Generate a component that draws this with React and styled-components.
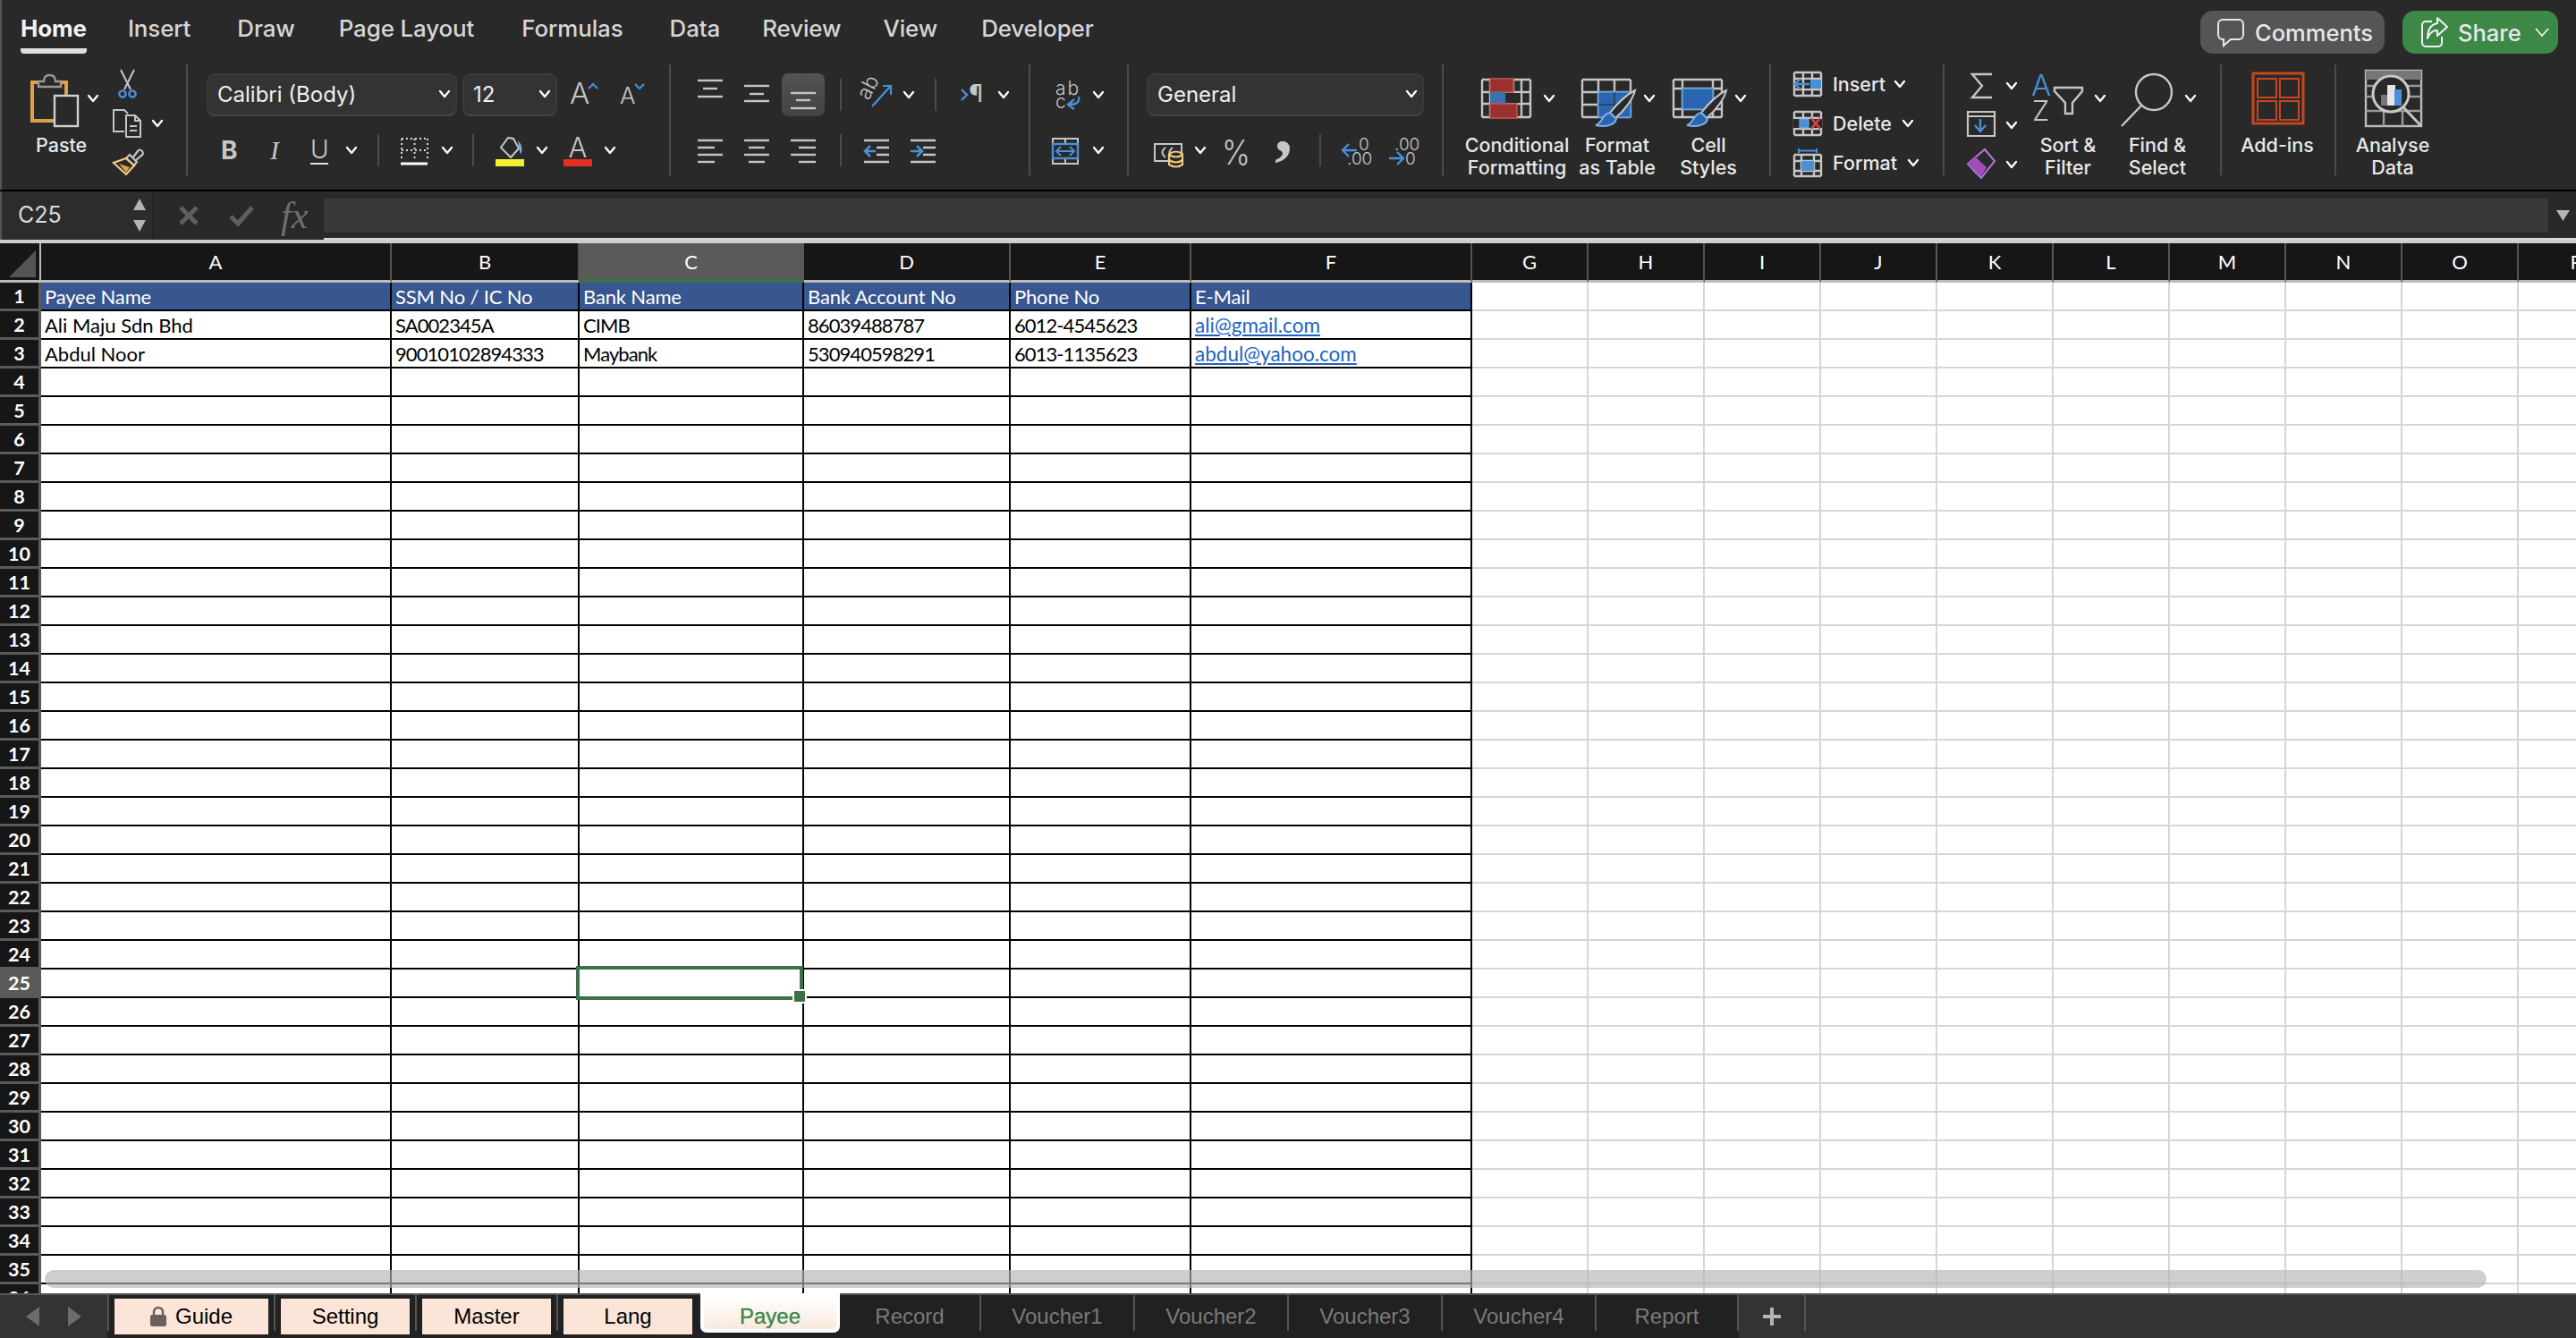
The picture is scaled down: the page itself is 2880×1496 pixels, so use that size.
import React from "react";
import styled, { createGlobalStyle } from "styled-components";

const UI = `"Inter", "Liberation Sans", sans-serif`;
const GRAY = "#c6c6c6";
const BLUE = "#4a90d6";
const DEEP = "#2a65b0";

const Global = createGlobalStyle`
  html, body { margin: 0; padding: 0; background: #292929; overflow: hidden; }
  body { font-family: ${UI}; }
  * { box-sizing: border-box; }
`;

const Page = styled.div`
  width: 2880px; height: 1496px; display: flex; flex-direction: column; overflow: hidden; background: #292929;
`;

/* ---------- ribbon ---------- */
const Ribbon = styled.header`
  height: 214px; flex: none; background: #292929; border-bottom: 2px solid #000;
  box-shadow: inset 2px 0 0 #555; display: flex; flex-direction: column;
`;
const TabRow = styled.nav`
  height: 72px; flex: none; display: flex; align-items: flex-start; padding: 0 20px 0 23px;
`;
const MenuTab = styled.span`
  height: 60px; line-height: 64px; margin-right: ${p => p.$gap}px; font-size: 25.9px; letter-spacing: -0.1px;
  font-weight: ${p => (p.$active ? 700 : 500)}; color: ${p => (p.$active ? "#f2f2f2" : "#d6d6d6")};
  border-bottom: ${p => (p.$active ? "6px solid #dedede" : "6px solid transparent")}; border-radius: 0 0 4px 4px;
`;
const Actions = styled.div`
  margin-left: auto; display: flex; gap: 20px; padding-top: 12px;
`;
const ActionButton = styled.button`
  height: 48px; width: ${p => p.$w}px; border: none; border-radius: 14px; display: flex; align-items: center; gap: 11px;
  padding: 0 0 0 ${p => p.$pad}px; background: ${p => p.$bg}; color: #e8e8e8; font: 500 25.5px ${UI};
`;
const Tools = styled.div`
  height: 124px; flex: none; display: flex;
`;
const Group = styled.section`
  width: ${p => p.$w}px; flex: none; display: flex; height: 124px; padding-top: 10px;
  ${p => (p.$last ? "" : "border-right: 2px solid #4c4c4c;")}
`;
const Stack = styled.div`
  display: flex; flex-direction: column; gap: 14px; flex: none;
`;
const ToolRow = styled.div`
  height: 48px; display: flex; align-items: center; padding-left: ${p => p.$pad || 0}px;
`;
const TightStack = styled.div`
  display: flex; flex-direction: column; gap: 12px; margin-top: -2px; margin-left: ${p => p.$ml}px; flex: none;
`;
const TightRow = styled.div`
  height: 32px; display: flex; align-items: center;
`;
const Ico = styled.svg.attrs(p => ({
  width: p.$w, height: p.$h || 48, viewBox: `0 0 ${p.$w} ${p.$h || 48}`, fill: "none",
}))`
  flex: none; overflow: visible; display: block; margin-left: ${p => p.$ml || 0}px; margin-top: ${p => p.$mt || 0}px;
`;
const Sep = styled.span`
  width: 2px; height: 36px; flex: none; background: #4c4c4c; margin-left: ${p => p.$ml}px;
`;
const Select = styled.div`
  width: ${p => p.$w}px; height: 48px; flex: none; margin-left: ${p => p.$ml || 0}px; border-radius: 9px;
  background: #333; border: 2px solid #3a3a3a; border-bottom-color: #454545; display: flex; align-items: center;
  justify-content: space-between; padding: 0 6px 2px 10px; font-size: 24px; color: #f0f0f0;
`;
const Bold = styled.span`
  width: 16px; margin-left: ${p => p.$ml}px; flex: none; font: 700 28px ${UI}; color: ${GRAY}; line-height: 1; text-align: center;
`;
const Italic = styled.span`
  width: 12px; margin-left: ${p => p.$ml}px; flex: none; font: italic 400 30px "Liberation Serif", serif; color: ${GRAY}; line-height: 1; text-align: center;
`;
const Under = styled.span`
  width: 20px; margin-left: ${p => p.$ml}px; flex: none; font: 300 28px ${UI}; color: ${GRAY}; line-height: 30px; text-align: center;
  border-bottom: 2px solid #e0e0e0;
`;
const Selected = styled.span`
  width: 48px; height: 48px; flex: none; margin-left: ${p => p.$ml}px; border-radius: 7px; background: linear-gradient(#535353, #434343);
  display: flex; justify-content: center;
`;
const BigTool = styled.div`
  width: ${p => p.$w}px; flex: none; margin-left: ${p => p.$ml || 0}px; display: flex; flex-direction: column; align-items: center;
`;
const BigIcon = styled.div`
  height: 60px; display: flex; align-items: flex-start; justify-content: center; gap: ${p => (p.$gap === undefined ? 14 : p.$gap)}px; padding-left: 2px;
`;
const BigLabel = styled.span`
  margin-top: 8px; font: 500 21.5px/25px ${UI}; color: #e8e8e8; text-align: center; white-space: pre-line;
`;
const PasteTool = styled.div`
  width: 76px; margin-left: 34px; display: flex; flex-direction: column; align-items: flex-start; flex: none;
`;
const PasteLabel = styled(BigLabel)`
  margin-left: 6px;
`;
const PasteIcon = styled.div`
  display: flex; height: 60px; align-items: flex-start; gap: 10px;
`;
const ClipColumn = styled.div`
  display: flex; flex-direction: column; gap: 12px; margin: -4px 0 0 16px;
`;
const ClipRow = styled.div`
  height: 32px; display: flex; align-items: center; padding-left: ${p => p.$pad || 0}px;
`;
const CellLabel = styled.span`
  margin: 0 ${p => p.$after}px 0 12px; padding-bottom: 4px; font: 500 21.5px ${UI}; color: #e8e8e8; width: ${p => p.$w}px;
`;

const Chev = p => (
  <Ico $w={12} $h={8} $ml={p.ml} $mt={p.mt}>
    <polyline points="1,1 6,7 11,1" stroke="#fff" strokeWidth="2.3" strokeLinecap="round" strokeLinejoin="round" />
  </Ico>
);
const Line = p => <line stroke={GRAY} strokeWidth="2.4" {...p} />;

const Paste = () => (
  <Ico $w={54} $h={60}>
    <path d="M26 53H2V10H9M34 10H40V24" stroke="#dfa04a" strokeWidth="4" />
    <path d="M9 15V9H15Q15 2 21.5 2Q28 2 28 9H34V15Z" stroke="#9a9a9a" strokeWidth="2.4" />
    <rect x="27" y="25" width="26" height="34" stroke="#d0d0d0" strokeWidth="2.4" />
  </Ico>
);
const Scissors = () => (
  <Ico $w={21} $h={32}>
    <path d="M3 0L14 22M18 0L7 22" stroke={GRAY} strokeWidth="2" />
    <circle cx="5" cy="27" r="3.6" stroke={BLUE} strokeWidth="2.4" />
    <circle cx="16" cy="27" r="3.6" stroke={BLUE} strokeWidth="2.4" />
  </Ico>
);
const Copy = () => (
  <Ico $w={32} $h={32}>
    <path d="M13 25H1V1H13L17 5" stroke={GRAY} strokeWidth="2" />
    <path d="M15 7H25L31 13V31H15ZM25 7V13H31M19 19H27M19 24H27" stroke={GRAY} strokeWidth="2" />
  </Ico>
);
const Painter = () => (
  <Ico $w={34} $h={30}>
    <path d="M22 11L28 3Q30 0 33 3Q35 6 32 8L25 14" stroke={GRAY} strokeWidth="2.2" />
    <path d="M19 7L27 15L24 19L15 11Z" stroke={GRAY} strokeWidth="2.2" />
    <path d="M15 11L24 19L15 29L1 16Z" stroke="#f0c98a" strokeWidth="2.2" />
    <path d="M7 17L19 21L15 27Z" fill="#dfa04a" />
  </Ico>
);
const GrowA = ({ up, size, w, ml, cx, a }) => (
  <Ico $w={w} $ml={ml}>
    <text x={0} y={34} fontFamily={UI} fontWeight="300" fontSize={size} fill={GRAY}>A</text>
    <polyline points={up ? `${cx - 5},${a + 5} ${cx},${a} ${cx + 5},${a + 5}` : `${cx - 5},${a} ${cx},${a + 5} ${cx + 5},${a}`} stroke={BLUE} strokeWidth="2.2" />
  </Ico>
);
const BordersIcon = ({ ml }) => (
  <Ico $w={30} $ml={ml}>
    <path d="M1 11H30M1 11V36M30 11V36M1 24H30M15.5 11V36" stroke="#d8d8d8" strokeWidth="2" strokeDasharray="2 3" />
    <path d="M0 39H30" stroke="#fff" strokeWidth="3" />
  </Ico>
);
const FillIcon = ({ ml }) => (
  <Ico $w={32} $ml={ml}>
    <path d="M14 10L20 11L26 22L17 32L6 21Z" stroke={GRAY} strokeWidth="2" />
    <path d="M25 13Q32 20 28 29Q26 22 25 13Z" fill="#76b0e8" />
    <rect y="34" width="32" height="8" fill="#f5ee34" />
  </Ico>
);
const ColorA = ({ ml }) => (
  <Ico $w={32} $ml={ml}>
    <text x={16} y={32} textAnchor="middle" fontFamily={UI} fontWeight="300" fontSize="31" fill={GRAY}>A</text>
    <rect y="34" width="32" height="8" fill="#e63023" />
  </Ico>
);
const Lines = ({ ys, rows, ml }) => (
  <Ico $w={28} $ml={ml}>
    {ys.map((y, i) => <Line key={y} x1={rows[i][0]} x2={rows[i][1]} y1={y} y2={y} />)}
  </Ico>
);
const Orientation = ({ ml }) => (
  <Ico $w={33} $ml={ml}>
    <text x={0} y={0} transform="translate(7 31) rotate(-62)" fontFamily={UI} fontWeight="300" fontSize="23" fill={GRAY}>ab</text>
    <path d="M11 37L31 15M23 14H32V24" stroke={BLUE} strokeWidth="2.2" />
  </Ico>
);
const Rtl = ({ ml }) => (
  <Ico $w={24} $ml={ml}>
    <polyline points="1,18 7,24 1,30" stroke={BLUE} strokeWidth="2.4" />
    <text x={9} y={32} fontFamily={UI} fontWeight="400" fontSize="27" fill={GRAY}>¶</text>
  </Ico>
);
const Indent = ({ ml, flip }) => (
  <Ico $w={28} $ml={ml}>
    <path d="M0 13H28M0 37H28M14 21H28M14 29H28" stroke={GRAY} strokeWidth="2.4" />
    <path d={flip ? "M0 25H12M7 19L13 25L7 31" : "M13 25H1M7 19L1 25L7 31"} stroke={BLUE} strokeWidth="2.6" />
  </Ico>
);
const Wrap = ({ ml }) => (
  <Ico $w={28} $ml={ml}>
    <text fontFamily={UI} fontWeight="300" fontSize="21" fill={GRAY}>
      <tspan x={0} y={24} letterSpacing="2">ab</tspan>
      <tspan x={0} y={39}>c</tspan>
    </text>
    <path d="M26 26Q28 35 15 35M21 29L14 35L21 40" stroke={BLUE} strokeWidth="2.4" />
  </Ico>
);
const Merge = ({ ml }) => (
  <Ico $w={30} $ml={ml}>
    <path d="M1 11H29V39H1ZM15 11V39" stroke={GRAY} strokeWidth="2" />
    <rect x="1" y="17" width="28" height="16" fill="#292929" stroke={BLUE} strokeWidth="2.4" />
    <path d="M5 25H25M10 20L5 25L10 30M20 20L25 25L20 30" stroke={BLUE} strokeWidth="2" />
  </Ico>
);
const Accounting = ({ ml }) => (
  <Ico $w={34} $ml={ml}>
    <rect x="1" y="17" width="30" height="19" stroke={GRAY} strokeWidth="2" />
    <path d="M13 21Q6 26 13 32M21 21Q14 26 21 32" stroke={GRAY} strokeWidth="2" />
    <path d="M17 28Q25 23 32 28V40Q25 45 17 40Z" fill="#292929" stroke="#eecb7c" strokeWidth="2.2" />
    <path d="M17 29Q25 34 32 29M17 35Q25 40 32 35" stroke="#eecb7c" strokeWidth="2.2" />
  </Ico>
);
const Percent = ({ ml }) => (
  <Ico $w={32} $ml={ml}>
    <text x={0} y={40} textLength="32" lengthAdjust="spacingAndGlyphs" fontFamily={UI} fontWeight="300" fontSize="38" fill={GRAY}>%</text>
  </Ico>
);
const Comma = ({ ml }) => (
  <Ico $w={14} $ml={ml}>
    <text x={-3} y={26} fontFamily="Liberation Serif" fontWeight="700" fontSize="80" fill={GRAY}>,</text>
  </Ico>
);
const Decimal = ({ ml, less }) => (
  <Ico $w={31} $ml={ml}>
    <text fontFamily={UI} fontWeight="300" fontSize="19" fill={GRAY}>
      <tspan x={less ? 19 : 7} y={24}>{less ? "0" : ".00"}</tspan>
      <tspan x={less ? 6 : 19} y={40}>{less ? ".00" : "0"}</tspan>
    </text>
    {less
      ? <path d="M17 24H1M8 17L1 24L8 31" stroke={BLUE} strokeWidth="2.4" />
      : <path d="M1 33H17M10 26L17 33L10 40" stroke={BLUE} strokeWidth="2.4" />}
  </Ico>
);
const GridLines = ({ xs, ys }) => (
  <path
    d={[
      ...xs.map(x => `M${x} ${ys[0]}V${ys[ys.length - 1]}`),
      ...ys.map(y => `M${xs[0]} ${y}H${xs[xs.length - 1]}`),
    ].join("")}
    stroke={GRAY}
    strokeWidth="2.4"
  />
);
const Brush = () => (
  <>
    <path d="M60 19C58 28 48 42 38 50L32 44C40 34 50 24 60 19Z" fill="#292929" stroke={GRAY} strokeWidth="2" />
    <path d="M32 44L39 51C38 57 28 61 16 58C24 56 22 46 32 44Z" fill={DEEP} stroke="#7ab0e8" strokeWidth="2" />
  </>
);
const Conditional = () => (
  <Ico $w={56} $h={60}>
    <GridLines xs={[1, 10, 36, 45, 55]} ys={[7, 21, 34, 49]} />
    <rect x="27" y="22" width="17" height="11" fill="#292929" />
    <rect x="10" y="6" width="26" height="15" fill="#9a3030" stroke="#c75050" strokeWidth="1.5" />
    <rect x="10" y="21" width="17" height="13" fill="#3a72ad" />
    <rect x="10" y="34" width="30" height="16" fill="#9a3030" stroke="#c75050" strokeWidth="1.5" />
  </Ico>
);
const FormatTable = () => (
  <Ico $w={56} $h={60}>
    <GridLines xs={[1, 19, 37, 55]} ys={[7, 21, 35, 49]} />
    <rect x="19" y="21" width="36" height="28" fill={DEEP} stroke="#5a9bdc" strokeWidth="1.6" />
    <path d="M19 35H55M37 21V49" stroke="#292929" strokeWidth="1" />
    <Brush />
  </Ico>
);
const CellStyle = () => (
  <Ico $w={56} $h={60}>
    <GridLines xs={[1, 11, 45, 55]} ys={[7, 17, 40, 49]} />
    <rect x="11" y="17" width="34" height="23" fill={DEEP} stroke="#5a9bdc" strokeWidth="1.6" />
    <Brush />
  </Ico>
);
const InsertIcon = () => (
  <Ico $w={32} $h={32}>
    <GridLines xs={[1, 11, 21, 31]} ys={[1, 8, 20, 27]} />
    <rect x="13" y="9" width="18" height="10" fill="#292929" />
    <rect x="19" y="9" width="12" height="10" fill={BLUE} />
    <path d="M18 14H2M8 8L2 14L8 20" stroke={BLUE} strokeWidth="2.4" />
  </Ico>
);
const DeleteIcon = () => (
  <Ico $w={32} $h={32}>
    <GridLines xs={[1, 11, 21, 31]} ys={[1, 8, 20, 27]} />
    <rect x="0" y="9" width="32" height="10" fill="#292929" />
    <rect x="7" y="9" width="10" height="10" fill={BLUE} stroke="#7ab0e8" />
    <path d="M20 8L30 20M30 8L20 20" stroke="#d9483f" strokeWidth="2.4" />
  </Ico>
);
const FormatIcon = () => (
  <Ico $w={32} $h={32}>
    <path d="M6 -2V3M26 -2V3M6 0.5H26" stroke={BLUE} strokeWidth="2" />
    <GridLines xs={[1, 9, 23, 31]} ys={[5, 12, 23, 29]} />
    <rect x="9" y="12" width="14" height="11" fill={BLUE} />
  </Ico>
);
const Sigma = () => (
  <Ico $w={32} $h={32}>
    <path d="M28 3H6L17 16L6 29H28" stroke={GRAY} strokeWidth="2.4" />
  </Ico>
);
const FillDown = () => (
  <Ico $w={32} $h={32}>
    <path d="M1 1H31V28H1ZM1 6H31" stroke={GRAY} strokeWidth="2.2" />
    <path d="M15 9V22M9 16L15 23L21 16" stroke={BLUE} strokeWidth="2.4" />
  </Ico>
);
const Eraser = () => (
  <Ico $w={32} $h={32}>
    <path d="M1 15L9 24L16 31L31 12L20 -1Z" stroke="#b57bd0" strokeWidth="2" />
    <path d="M1 15L9 7L22 19L16 30Z" fill="#a04db8" />
  </Ico>
);
const SortIcon = () => (
  <Ico $w={57} $h={60}>
    <text x={-1} y={25} fontFamily={UI} fontWeight="300" fontSize="33" fill={BLUE}>A</text>
    <text x={0} y={53} fontFamily={UI} fontWeight="300" fontSize="31" fill={GRAY}>Z</text>
    <path d="M25 16H56V20L45 33V45H37V33L25 20Z" stroke={GRAY} strokeWidth="2.4" />
  </Ico>
);
const FindIcon = () => (
  <Ico $w={58} $h={60}>
    <circle cx="37" cy="21" r="20" stroke={GRAY} strokeWidth="2.4" />
    <path d="M23 36L1 59" stroke={GRAY} strokeWidth="2.4" />
  </Ico>
);
const AddIns = () => (
  <Ico $w={58} $h={60}>
    <rect x="1" y="0" width="56" height="56" stroke="#c6471f" strokeWidth="3" />
    <g stroke="#c6471f" strokeWidth="2">
      <rect x="6" y="6" width="21" height="21" />
      <rect x="31" y="6" width="21" height="21" />
      <rect x="6" y="31" width="21" height="21" />
      <rect x="31" y="31" width="21" height="21" />
    </g>
  </Ico>
);
const Analyse = () => (
  <Ico $w={64} $h={60}>
    <g transform="translate(0 -4)">
      <rect x="1" y="1" width="62" height="62" stroke="#bbb" strokeWidth="2.4" />
      <rect x="1" y="1" width="62" height="10" fill="#777" />
      <path d="M1 18H63M1 30H63M1 46H63M21 46V63M42 46V63" stroke="#999" strokeWidth="2.4" />
      <circle cx="29" cy="27" r="20" fill="#292929" stroke="#c8c8c8" strokeWidth="3" />
      <path d="M43 42L63 63" stroke={GRAY} strokeWidth="3" />
      <rect x="18" y="28" width="8" height="12" fill="#777" />
      <rect x="25" y="17" width="9" height="23" fill="#e6e6e6" />
      <rect x="33" y="22" width="8" height="18" fill="#4a90d6" />
    </g>
  </Ico>
);
const Bubble = () => (
  <Ico $w={32} $h={32}>
    <path d="M7 2H25A5 5 0 0 1 30 7V19A5 5 0 0 1 25 24H16L8 31V24H7A5 5 0 0 1 2 19V7A5 5 0 0 1 7 2Z" stroke="#e8e8e8" strokeWidth="2" />
  </Ico>
);
const ShareIcon = () => (
  <Ico $w={31} $h={36}>
    <path d="M13 6H6A4 4 0 0 0 2 10V30A4 4 0 0 0 6 34H20A4 4 0 0 0 24 30V23" stroke="#f2f2f2" strokeWidth="2" />
    <path d="M19 2L30 12L19 22V16Q11 16 8 25Q8 10 19 8Z" stroke="#f2f2f2" strokeWidth="2" strokeLinejoin="round" />
  </Ico>
);
const ThinChev = () => (
  <Ico $w={16} $h={10} $ml={4}>
    <polyline points="1,1 8,9 15,1" stroke="#f2f2f2" strokeWidth="1.8" />
  </Ico>
);

/* ---------- formula bar ---------- */
const FormulaBar = styled.div`
  height: 58px; flex: none; background: #292929; border-bottom: 4px solid #cfcfcf; display: flex; box-shadow: inset 2px 0 0 #555;
`;
const NameBox = styled.div`
  width: 170px; height: 52px; margin: 2px 0 0 2px; flex: none; background: #2c2c2c; border-right: 2px solid #222; display: flex; align-items: center;
  justify-content: space-between; padding: 0 6px 4px 18px; font-size: 25px; color: #dcdcdc;
`;
const FormulaButtons = styled.div`
  width: 190px; flex: none; display: flex; align-items: center; padding-left: 28px; gap: 30px; color: #5f5f5f;
`;
const Fx = styled.span`
  font: italic 400 42px "Liberation Serif", serif; color: #6f6f6f; line-height: 1;
`;
const FormulaField = styled.div`
  flex: 1; height: 54px; display: flex; border-bottom: 2px solid #d8d8d8;
`;
const FormulaInput = styled.div`
  flex: none; width: 2487px; height: 38px; margin-top: 8px; background: #383838;
`;
const FormulaDrop = styled.div`
  margin: 21px 0 0 9px;
`;

/* ---------- grid ---------- */
const Sheet = styled.main`
  flex: 1; min-height: 0; overflow: hidden; position: relative; background: #fff;
`;
const SheetRow = styled.div`
  display: flex; height: ${p => p.$h}px; width: 2946px;
`;
const Corner = styled.div`
  width: 46px; flex: none; background: #161616; border-right: 2px solid #bbb; border-bottom: 3px solid #bbb; padding: 8px 0 0 10px;
`;
const ColHead = styled.div`
  width: ${p => p.$w}px; flex: none; background: ${p => (p.$on ? "#5a5a5a" : "#161616")}; color: #fff; display: flex; align-items: center;
  justify-content: center; font: 400 22px "Lato", sans-serif; border-right: 2px solid ${p => (p.$on ? "#5a5a5a" : "#555")};
  border-bottom: ${p => (p.$on ? "4px solid #3c7048" : "3px solid #bbb")};
`;
const RowHead = styled.div`
  width: 46px; flex: none; background: ${p => (p.$on ? "#5a5a5a" : "#161616")}; color: #fff; display: flex; align-items: center;
  justify-content: center; font: 700 21.5px "Lato", sans-serif; border-right: 3px solid #5a5a5a; border-bottom: 3px solid #5a5a5a;
`;
const Cell = styled.div`
  position: relative; width: ${p => p.$w}px; flex: none; padding-left: 4px; white-space: nowrap; overflow: ${p => (p.$sel ? "visible" : "hidden")};
  font: 400 22px/32px "Lato", sans-serif; letter-spacing: ${p => (p.$tight ? "-0.93px" : p.$head ? "-0.15px" : "0")};
  color: ${p => (p.$head ? "#fff" : "#000")}; background: ${p => (p.$head ? "#38568f" : "#fff")};
  border-right: 2px solid ${p => (p.$out ? "#d6d6d6" : "#000")};
  border-bottom: 2px solid ${p => (p.$out ? "#d6d6d6" : "#000")};
`;
const CellLink = styled.span`
  color: #1f63c4; text-decoration: underline; font-size: 22.5px;
`;
const Selection = styled.div`
  position: absolute; left: -4px; top: -4px; right: -1px; bottom: -4px; border: 4px solid #3c7048; z-index: 2;
`;
const Handle = styled.div`
  position: absolute; right: -6px; bottom: -6px; width: 12px; height: 12px; background: #3c7048; outline: 2px solid #fff;
`;
const Scrollbar = styled.div`
  position: absolute; left: 50px; bottom: 6px; width: 2730px; height: 20px; border-radius: 10px; background: rgba(180, 180, 180, 0.66); z-index: 3;
`;

/* ---------- sheet tabs ---------- */
const TabBar = styled.footer`
  height: 50px; flex: none; display: flex; align-items: flex-start; background: #212121; border-top: 2px solid #555;
`;
const TabNav = styled.div`
  width: 120px; height: 48px; flex: none; background: #333; display: flex; align-items: center; gap: 32px; padding-left: 29px;
`;
const TabSep = styled.span`
  width: 2px; height: 40px; flex: none; background: #555;
`;
const LockedTab = styled.div`
  width: ${p => p.$w}px; height: 40px; margin: 4px 6px 0 6px; flex: none; background: #fae5d8; color: #000; display: flex; align-items: center;
  justify-content: center; gap: 10px; font: 400 24px "Liberation Sans", sans-serif;
`;
const CurrentTab = styled.div`
  width: 156px; height: 44px; margin: -2px 0 0 3px; flex: none; border: 4px solid #fff; border-top-width: 4px; border-radius: 0 0 7px 7px;
  padding-top: 8px; background: linear-gradient(#fff, #f9e9de); color: #3d8747; display: flex; align-items: center; justify-content: center;
  font: 400 24px "Liberation Sans", sans-serif; -webkit-text-stroke: 0.4px #3d8747;
`;
const DarkTab = styled.div`
  width: ${p => p.$w}px; height: 40px; flex: none; padding-top: 10px; text-align: center; color: #7a7a7a; border-right: 2px solid #555;
  font: 400 24px "Liberation Sans", sans-serif;
`;
const TabRest = styled.div`
  flex: 1; height: 48px; background: #333;
`;
const PlusTab = styled.div`
  width: 75px; height: 40px; display: flex; align-items: center; justify-content: center; border-right: 2px solid #555; padding-top: 8px;
`;

const widths = [392, 210, 251, 231, 202, 314, 130, 130, 130, 130, 130, 130, 130, 130, 130, 130];
const letters = "ABCDEFGHIJKLMNOP".split("");
const data = {
  1: ["Payee Name", "SSM No / IC No", "Bank Name", "Bank Account No", "Phone No", "E-Mail"],
  2: ["Ali Maju Sdn Bhd", "SA002345A", "CIMB", "86039488787", "6012-4545623", "ali@gmail.com"],
  3: ["Abdul Noor", "90010102894333", "Maybank", "530940598291", "6013-1135623", "abdul@yahoo.com"],
};
const menu = [
  ["Home", 46], ["Insert", 52], ["Draw", 49], ["Page Layout", 53], ["Formulas", 52], ["Data", 47], ["Review", 47], ["View", 49], ["Developer", 0],
];
const rowNums = Array.from({ length: 36 }, (_, i) => i + 1);
const isTight = t => /^[\dA-Z-]+$/.test(t) || t === "Maybank";

const GridRow = ({ n }) => (
  <SheetRow $h={32}>
    <RowHead $on={n === 25}>{n}</RowHead>
    {widths.map((w, c) => {
      const txt = data[n]?.[c];
      return (
        <Cell key={c} $w={w} $head={n === 1 && c < 6} $tight={txt && n > 1 && isTight(txt)} $out={c >= 6} $sel={n === 25 && c === 2}>
          {txt && (c === 5 && n > 1 ? <CellLink>{txt}</CellLink> : txt)}
          {n === 25 && c === 2 && <Selection><Handle /></Selection>}
        </Cell>
      );
    })}
  </SheetRow>
);

export default function App() {
  return (
    <Page>
      <Global />
      <Ribbon>
        <TabRow>
          {menu.map(([t, g], i) => <MenuTab key={t} $active={i === 0} $gap={g}>{t}</MenuTab>)}
          <Actions>
            <ActionButton $w={206} $bg="#555" $pad={18}><Bubble />Comments</ActionButton>
            <ActionButton $w={174} $bg="#3d8747" $pad={20}><ShareIcon />Share<ThinChev /></ActionButton>
          </Actions>
        </TabRow>
        <Tools>
          <Group $w={210}>
            <PasteTool>
              <PasteIcon><Paste /><Chev mt={24} /></PasteIcon>
              <PasteLabel>Paste</PasteLabel>
            </PasteTool>
            <ClipColumn>
              <ClipRow $pad={6}><Scissors /></ClipRow>
              <ClipRow><Copy /><Chev ml={12} /></ClipRow>
              <ClipRow><Painter /></ClipRow>
            </ClipColumn>
          </Group>

          <Group $w={540}>
            <Stack>
              <ToolRow>
                <Select $w={280} $ml={21}>Calibri (Body)<Chev /></Select>
                <Select $w={106} $ml={6}>12<Chev /></Select>
                <GrowA up size={33} w={34} ml={14} cx={26} a={12} />
                <GrowA size={26} w={34} ml={22} cx={22} a={12} />
              </ToolRow>
              <ToolRow>
                <Bold $ml={37}>B</Bold>
                <Italic $ml={38}>I</Italic>
                <Under $ml={34}>U</Under>
                <Chev ml={20} />
                <Sep $ml={23} />
                <BordersIcon ml={24} />
                <Chev ml={16} />
                <Sep $ml={22} />
                <FillIcon ml={24} />
                <Chev ml={14} />
                <ColorA ml={18} />
                <Chev ml={14} />
              </ToolRow>
            </Stack>
          </Group>

          <Group $w={402}>
            <Stack>
              <ToolRow>
                <Lines ml={30} ys={[8, 17, 26]} rows={[[0, 28], [6, 22], [0, 28]]} />
                <Lines ml={24} ys={[14, 23, 31]} rows={[[0, 28], [6, 22], [0, 28]]} />
                <Selected $ml={14}>
                  <Lines ys={[22, 30, 39]} rows={[[0, 28], [6, 22], [0, 28]]} />
                </Selected>
                <Sep $ml={17} />
                <Orientation ml={23} />
                <Chev ml={13} />
                <Sep $ml={23} />
                <Rtl ml={27} />
                <Chev ml={18} />
              </ToolRow>
              <ToolRow>
                <Lines ml={30} ys={[13, 21, 29, 37]} rows={[[0, 28], [0, 19], [0, 28], [0, 19]]} />
                <Lines ml={24} ys={[13, 21, 29, 37]} rows={[[0, 28], [5, 23], [0, 28], [5, 23]]} />
                <Lines ml={24} ys={[13, 21, 29, 37]} rows={[[0, 28], [9, 28], [0, 28], [9, 28]]} />
                <Sep $ml={27} />
                <Indent ml={25} />
                <Indent ml={24} flip />
              </ToolRow>
            </Stack>
          </Group>

          <Group $w={110}>
            <Stack>
              <ToolRow $pad={28}><Wrap /><Chev ml={14} /></ToolRow>
              <ToolRow $pad={24}><Merge /><Chev ml={16} /></ToolRow>
            </Stack>
          </Group>

          <Group $w={352}>
            <Stack>
              <ToolRow><Select $w={310} $ml={20}>General<Chev /></Select></ToolRow>
              <ToolRow>
                <Accounting ml={28} />
                <Chev ml={12} />
                <Percent ml={18} />
                <Comma ml={30} />
                <Sep $ml={33} />
                <Decimal ml={23} less />
                <Decimal ml={21} />
              </ToolRow>
            </Stack>
          </Group>

          <Group $w={366}>
            <BigTool $w={120} $ml={22}>
              <BigIcon><Conditional /><Chev mt={24} /></BigIcon>
              <BigLabel>{"Conditional\nFormatting"}</BigLabel>
            </BigTool>
            <BigTool $w={104}>
              <BigIcon><FormatTable /><Chev mt={24} /></BigIcon>
              <BigLabel>{"Format\nas Table"}</BigLabel>
            </BigTool>
            <BigTool $w={100}>
              <BigIcon><CellStyle /><Chev mt={24} /></BigIcon>
              <BigLabel>{"Cell\nStyles"}</BigLabel>
            </BigTool>
          </Group>

          <Group $w={194}>
            <TightStack $ml={25}>
              <TightRow><InsertIcon /><CellLabel $w={56} $after={13}>Insert</CellLabel><Chev mt={-4} /></TightRow>
              <TightRow><DeleteIcon /><CellLabel $w={64} $after={14}>Delete</CellLabel><Chev mt={-4} /></TightRow>
              <TightRow><FormatIcon /><CellLabel $w={70} $after={14}>Format</CellLabel><Chev mt={-4} /></TightRow>
            </TightStack>
          </Group>

          <Group $w={310}>
            <TightStack $ml={25}>
              <TightRow><Sigma /><Chev ml={12} /></TightRow>
              <TightRow><FillDown /><Chev ml={12} /></TightRow>
              <TightRow><Eraser /><Chev ml={12} /></TightRow>
            </TightStack>
            <BigTool $w={100} $ml={7}>
              <BigIcon $gap={13}><SortIcon /><Chev mt={24} /></BigIcon>
              <BigLabel>{"Sort &\nFilter"}</BigLabel>
            </BigTool>
            <BigTool $w={100}>
              <BigIcon><FindIcon /><Chev mt={24} /></BigIcon>
              <BigLabel>{"Find &\nSelect"}</BigLabel>
            </BigTool>
          </Group>

          <Group $w={128}>
            <BigTool $w={124}>
              <BigIcon $gap={0}><AddIns /></BigIcon>
              <BigLabel>Add-ins</BigLabel>
            </BigTool>
          </Group>

          <Group $w={268} $last>
            <BigTool $w={126}>
              <BigIcon $gap={0}><Analyse /></BigIcon>
              <BigLabel>{"Analyse\nData"}</BigLabel>
            </BigTool>
          </Group>
        </Tools>
      </Ribbon>

      <FormulaBar>
        <NameBox>
          C25
          <Ico $w={16} $h={38}>
            <path d="M8 1L15 14H1ZM1 25H15L8 38Z" fill="#b4b4b4" />
          </Ico>
        </NameBox>
        <FormulaButtons>
          <Ico $w={22} $h={22}><path d="M2 2L20 20M20 2L2 20" stroke="#5f5f5f" strokeWidth="5" /></Ico>
          <Ico $w={28} $h={22} $ml={4}><path d="M2 12L10 20L26 2" stroke="#5f5f5f" strokeWidth="5" /></Ico>
          <Fx>fx</Fx>
        </FormulaButtons>
        <FormulaField>
          <FormulaInput />
          <FormulaDrop>
            <Ico $w={15} $h={12}><path d="M0 0H15L7.5 12Z" fill="#b4b4b4" /></Ico>
          </FormulaDrop>
        </FormulaField>
      </FormulaBar>

      <Sheet>
        <SheetRow $h={44}>
          <Corner>
            <Ico $w={30} $h={30}><path d="M30 0V30H0Z" fill="#555" /></Ico>
          </Corner>
          {widths.map((w, i) => <ColHead key={letters[i]} $w={w} $on={i === 2}>{letters[i]}</ColHead>)}
        </SheetRow>
        {rowNums.map(n => <GridRow key={n} n={n} />)}
        <Scrollbar />
      </Sheet>

      <TabBar>
        <TabNav>
          <Ico $w={15} $h={22}><path d="M15 0V22L0 11Z" fill="#6c6c6c" /></Ico>
          <Ico $w={15} $h={22}><path d="M0 0V22L15 11Z" fill="#6c6c6c" /></Ico>
        </TabNav>
        <TabSep />
        <LockedTab $w={172}>
          <Ico $w={18} $h={22}>
            <path d="M4 10V6A5 5 0 0 1 14 6V10" stroke="#6b605b" strokeWidth="2.4" />
            <rect x="0" y="9" width="18" height="13" rx="2.5" fill="#6b605b" />
          </Ico>
          Guide
        </LockedTab>
        <TabSep />
        <LockedTab $w={144}>Setting</LockedTab>
        <TabSep />
        <LockedTab $w={144}>Master</LockedTab>
        <TabSep />
        <LockedTab $w={144}>Lang</LockedTab>
        <CurrentTab>Payee</CurrentTab>
        <DarkTab $w={158}>Record</DarkTab>
        <DarkTab $w={172}>Voucher1</DarkTab>
        <DarkTab $w={172}>Voucher2</DarkTab>
        <DarkTab $w={172}>Voucher3</DarkTab>
        <DarkTab $w={172}>Voucher4</DarkTab>
        <DarkTab $w={159}>Report</DarkTab>
        <TabRest>
          <PlusTab>
            <Ico $w={20} $h={20}><path d="M10 0V20M0 10H20" stroke="#b4b4b4" strokeWidth="4" /></Ico>
          </PlusTab>
        </TabRest>
      </TabBar>
    </Page>
  );
}
